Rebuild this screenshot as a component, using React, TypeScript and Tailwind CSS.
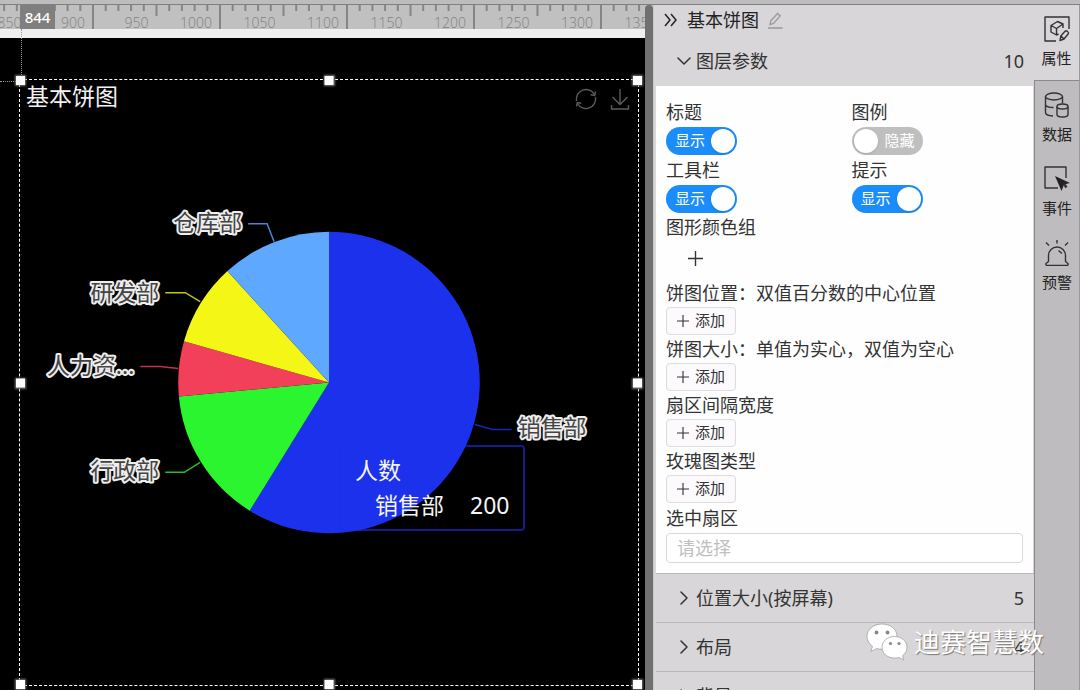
import { useState } from "react";
import type { ReactNode } from "react";
import { ChevronDown, ChevronRight } from "lucide-react";

type Slice = {
  name: string;
  value: number;
  color: string;
  line: string;
  label: { x: number; y: number; anchor: "start" | "end" };
};

const SLICES: Slice[] = [
  { name: "销售部", value: 200, color: "#1c31ec", line: "146,42 164,47 183,47", label: { x: 189, y: 54, anchor: "start" } },
  { name: "行政部", value: 50, color: "#2bf52f", line: "-129,80 -145,90 -164,90", label: { x: -170, y: 97, anchor: "end" } },
  { name: "人力资...", value: 20, color: "#f2405a", line: "-151,-14 -169,-16 -189,-16", label: { x: -195, y: -9, anchor: "end" } },
  { name: "研发部", value: 30, color: "#f4f716", line: "-129,-81 -144,-90 -164,-90", label: { x: -170, y: -82, anchor: "end" } },
  { name: "仓库部", value: 40, color: "#5fa8ff", line: "-55,-141 -62,-159 -81,-159", label: { x: -87, y: -152, anchor: "end" } },
];

const RADIUS = 151;

const LIST_FIELDS = [
  "饼图位置：双值百分数的中心位置",
  "饼图大小：单值为实心，双值为空心",
  "扇区间隔宽度",
  "玫瑰图类型",
];

const CLOSED_SECTIONS = [
  { title: "位置大小(按屏幕)", count: "5" },
  { title: "布局", count: "4" },
  { title: "背景", count: "" },
];

const HANDLES = [
  "-left-1 -top-1",
  "left-1/2 -top-1 -translate-x-1/2",
  "-right-1 -top-1",
  "-left-1 top-1/2 -translate-y-1/2",
  "-right-1 top-1/2 -translate-y-1/2",
  "-left-1 -bottom-1",
  "left-1/2 -bottom-1 -translate-x-1/2",
  "-right-1 -bottom-1",
];

function slicePath(from: number, to: number) {
  const point = (turn: number) => {
    const a = turn * 2 * Math.PI;
    return `${(RADIUS * Math.sin(a)).toFixed(2)} ${(-RADIUS * Math.cos(a)).toFixed(2)}`;
  };
  const large = to - from > 0.5 ? 1 : 0;
  return `M0 0L${point(from)}A${RADIUS} ${RADIUS} 0 ${large} 1 ${point(to)}Z`;
}

function PieChart() {
  const total = SLICES.reduce((sum, s) => sum + s.value, 0);
  let start = 0;
  return (
    <svg viewBox="-309 -303 618 606" className="absolute inset-0 h-full w-full">
      {SLICES.map((s) => {
        const from = start / total;
        start += s.value;
        return (
          <g key={s.name}>
            <path d={slicePath(from, start / total)} fill={s.color} />
            <polyline points={s.line} fill="none" stroke={s.color} strokeWidth="1.5" opacity="0.8" />
            <text
              x={s.label.x}
              y={s.label.y}
              textAnchor={s.label.anchor}
              fontSize="23"
              fill="#444"
              stroke="#eee"
              strokeWidth="4"
              strokeLinejoin="round"
              paintOrder="stroke"
            >
              {s.name}
            </text>
          </g>
        );
      })}
    </svg>
  );
}

function Ruler() {
  const ticks = Array.from({ length: 54 }, (_, i) => i);
  return (
    <div className="relative h-6 overflow-hidden bg-[#c0c0c0]">
      <svg className="block h-6 w-full" fontFamily="'Open Sans', sans-serif">
        {ticks.map((i) => {
          const x = 93 + (i - 8) * 12.7;
          const major = (i - 8) % 10 === 0;
          const middle = (i - 8) % 5 === 0;
          return (
            <g key={i}>
              <rect x={x - 1} y="0" width="2" height={major ? 24 : middle ? 11 : 6} fill="#858585" />
              {middle && (
                <text x={x - 8} y="23" textAnchor="end" fontSize="14" fontWeight="300" fill="#808080">
                  {900 + (i - 8) * 10}
                </text>
              )}
            </g>
          );
        })}
      </svg>
      <span className="absolute left-5 top-0 h-6 w-[35px] bg-[#7f7f7f] text-center text-[15px] leading-6 font-medium text-white">
        844
      </span>
    </div>
  );
}

function Canvas() {
  return (
    <main className="flex min-w-0 flex-1 flex-col">
      <Ruler />
      <div className="h-[9px] bg-[#efefef]" />
      <div className="relative flex-1 bg-black">
        <div className="absolute -top-[9px] left-[21px] h-[52px] border-l border-dotted border-[#999]" />
        <div className="absolute left-0 top-[43px] w-5 border-t border-dotted border-[#999]" />
        <section className="absolute bottom-1 left-[19px] right-[6px] top-[41px] border border-dashed border-white">
          <PieChart />
          <header className="relative flex items-start justify-between pl-1.5 pr-[7px]">
            <h1 className="text-[23px] leading-8 text-[#f2f2f2]">基本饼图</h1>
            <div className="flex gap-3 pt-2 text-[#5c5c5c]">
              <button type="button" aria-label="刷新">
                <svg width="22" height="22" viewBox="0 0 22 22" fill="none" stroke="currentColor" strokeWidth="1.4">
                  <path d="M1.500 13A9.700 9.700 0 0 1 19.500 6.500M20.500 9A9.700 9.700 0 0 1 2.500 15.500" />
                  <path d="M20.500 3.500l-.8 4-4-.8M1.500 18.500l.8-4 4 .8" />
                </svg>
              </button>
              <button type="button" aria-label="下载">
                <svg width="22" height="22" viewBox="0 0 22 22" fill="none" stroke="currentColor" strokeWidth="1.4">
                  <path d="M11 1v15M3.500 9l7.500 7.500L18.500 9M2.500 17v4h17v-4" />
                </svg>
              </button>
            </div>
          </header>
          <div className="absolute left-1/2 top-1/2 ml-[10px] mt-[62px] rounded border-2 border-[#1c31ec]/60 px-3.5 py-1.5 text-[23px] leading-[35px] text-[#f5f5f5]">
            <p>人数</p>
            <p className="flex justify-between gap-[26px] pl-5">
              <span>销售部</span>
              <span>200</span>
            </p>
          </div>
          {HANDLES.map((place) => (
            <span key={place} className={`absolute h-[9px] w-[9px] bg-white shadow-[0_0_2px_1px_#777] ${place}`} />
          ))}
        </section>
      </div>
    </main>
  );
}

function Switch({ label, initial }: { label: string; initial: boolean }) {
  const [on, setOn] = useState(initial);
  return (
    <label className="relative block w-fit">
      <span className="block leading-[30px]">{label}</span>
      <input type="checkbox" checked={on} onChange={() => setOn(!on)} className="sr-only" />
      <span
        className={`flex h-7 w-[71px] items-center justify-between rounded-full text-[15px] text-white ${
          on ? "flex-row bg-[#1b8dfb] pl-[9px] pr-0.5" : "flex-row-reverse bg-[#bfbfbf] pl-0.5 pr-2"
        }`}
      >
        <span>{on ? "显示" : "隐藏"}</span>
        <span className="h-6 w-6 rounded-full bg-white shadow" />
      </span>
    </label>
  );
}

function Plus({ size }: { size: number }) {
  return (
    <svg width={size} height={size} viewBox="0 0 14 14" fill="none" stroke="currentColor" strokeWidth="1.3">
      <path d="M7 0v14M0 7h14" />
    </svg>
  );
}

function SectionHeader({ title, count, open = false }: { title: string; count: string; open?: boolean }) {
  const Icon = open ? ChevronDown : ChevronRight;
  return (
    <button
      type="button"
      aria-expanded={open}
      className={`flex w-full shrink-0 items-center pl-4 pr-2.5 text-left ${
        open ? "h-[51px]" : "h-[49px] border-t border-[#b9b7b9]"
      }`}
    >
      <Icon className="h-6 w-6" strokeWidth={1.5} aria-hidden />
      <span className="flex-1">{title}</span>
      <span>{count}</span>
    </button>
  );
}

function PropertyPanel() {
  return (
    <aside className="flex w-[380px] shrink-0 flex-col overflow-hidden bg-[#d8d6d8] pl-0.5 text-lg text-[#333]">
      <div className="flex h-[30px] shrink-0 items-center pl-2">
        <button type="button" aria-label="收起">
          <svg width="13" height="14" viewBox="0 0 13 14" fill="none" stroke="#222" strokeWidth="1.5">
            <path d="M1 1l5 6-5 6M7 1l5 6-5 6" />
          </svg>
        </button>
        <h2 className="ml-2.5 text-lg text-[#222]">基本饼图</h2>
        <button type="button" aria-label="重命名" className="ml-2 text-[#999]">
          <svg width="16" height="17" viewBox="0 0 16 17" fill="none" stroke="currentColor" strokeWidth="1.3">
            <path d="M3 12.500l.8-3.600L10.500 1.500l2.700 2.400-6.700 7.500zM1 16h14.500" />
          </svg>
        </button>
      </div>
      <SectionHeader title="图层参数" count="10" open />
      <div className="mr-px shrink-0 bg-[#fefefe] px-2.5 pt-[11px] pb-2.5">
        <div className="grid grid-cols-2 gap-x-3.5">
          <Switch label="标题" initial />
          <Switch label="图例" initial={false} />
          <Switch label="工具栏" initial />
          <Switch label="提示" initial />
        </div>
        <p className="leading-7">图形颜色组</p>
        <button type="button" aria-label="添加颜色" className="mb-1 ml-[22px] flex h-[34px] items-center">
          <Plus size={15} />
        </button>
        {LIST_FIELDS.map((label) => (
          <div key={label}>
            <p className="leading-7">{label}</p>
            <button
              type="button"
              aria-label={`添加 ${label}`}
              className="flex h-7 w-[70px] items-center justify-center gap-1.5 rounded-sm border border-[#dcdcdc] bg-[#fcfafd] text-[15px]"
            >
              <Plus size={12} />
              <span>添加</span>
            </button>
          </div>
        ))}
        <label htmlFor="sector" className="block leading-[30px]">
          选中扇区
        </label>
        <input
          id="sector"
          placeholder="请选择"
          className="block h-[30px] w-full rounded-sm border border-[#d9d9d9] bg-white px-2.5 placeholder:text-[#bfbfbf]"
        />
      </div>
      {CLOSED_SECTIONS.map((s) => (
        <SectionHeader key={s.title} title={s.title} count={s.count} />
      ))}
    </aside>
  );
}

function TabIcon({ children }: { children: ReactNode }) {
  return (
    <svg width="26" height="26" viewBox="0 0 26 26" fill="none" stroke="#333" strokeWidth="1.4" strokeLinejoin="round">
      {children}
    </svg>
  );
}

const TABS = [
  {
    name: "属性",
    icon: (
      <>
        <path d="M12 25H1V1h24v12" />
        <path d="M7 9.500l6.500-4L19 8v4M7 9.500v6.500l5.500 3v-6.500zM12.500 12.500L19 8M12.500 19l2-1" />
        <path d="M16 24.500l.8-4.500 4.500-5c1-.9 4 1.500 3 2.800L20 23zM17 20l3 3" />
      </>
    ),
  },
  {
    name: "数据",
    icon: (
      <>
        <ellipse cx="10" cy="4.500" rx="8.500" ry="3.500" />
        <path d="M1.500 4.500v16c0 1.800 3 3.200 7.500 3.500M18.500 4.500v7M1.500 12.500c0 1.500 3 3 8 3" />
        <ellipse cx="18.500" cy="14.500" rx="5.500" ry="2.500" />
        <path d="M13 14.500v8c0 1.400 2.500 2.500 5.500 2.500s5.500-1.100 5.500-2.500v-8" />
      </>
    ),
  },
  {
    name: "事件",
    icon: (
      <>
        <path d="M14 22H1V1h21v11" />
        <path d="M11 10l15 7-6 1.500-2.500 6.500z" fill="#222" stroke="none" />
        <path d="M20 18l2.500 3.500" strokeWidth="2.500" />
      </>
    ),
  },
  {
    name: "预警",
    icon: (
      <>
        <path d="M4.500 21.500v-6a8.500 8.500 0 0 1 17 0v6l2.500 2c.5.800 0 2-1 2H3c-1 0-1.500-1.200-1-2z" />
        <path d="M13 0v3.500M2 2.500l3 3M24 2.500l-3 3M14.500 10.500l3.500 3" />
      </>
    ),
  },
];

function TabBar() {
  return (
    <nav className="flex w-[46px] shrink-0 flex-col border-r border-[#999] bg-[#bebcbe]">
      {TABS.map((tab, i) => (
        <button
          key={tab.name}
          type="button"
          aria-current={i === 0}
          className={`flex shrink-0 flex-col items-center gap-1.5 pt-[11px] text-[15px] leading-5 text-[#222] ${
            i === 0 ? "h-[76px] border-b border-[#8a8a8a] bg-[#d8d6d8]" : "h-[74px] border-l border-[#8a8a8a]"
          }`}
        >
          <TabIcon>{tab.icon}</TabIcon>
          <span>{tab.name}</span>
        </button>
      ))}
      <div className="flex-1 border-l border-[#8a8a8a]" />
    </nav>
  );
}

function Watermark() {
  return (
    <div className="pointer-events-none absolute bottom-7 right-9 flex items-center gap-1.5 text-[26px] leading-10 text-white [text-shadow:1px_1px_1px_#777]">
      <svg width="42" height="38" viewBox="0 0 42 38" fill="#fff" stroke="#999" strokeWidth="0.7">
        <path d="M16 1C7.500 1 1 6.500 1 13.500c0 4 2.200 7.500 5.500 9.800L4.800 28.500l5.800-3c1.700.5 3.500.8 5.400.8 8.500 0 15-5.600 15-12.800S24.500 1 16 1z" />
        <path d="M28.500 13.500C21.500 13.500 16 18.200 16 24.300s5.500 10.800 12.500 10.800c1.500 0 3-.2 4.400-.7l5 2.600-1.400-4.300c2.800-2 4.500-5 4.500-8.400 0-6.100-5.500-10.800-12.500-10.800z" />
        <g fill="#888" stroke="none">
          <circle cx="10.500" cy="9.500" r="1.900" />
          <circle cx="21.500" cy="9.500" r="1.900" />
          <circle cx="24.500" cy="20.500" r="1.600" />
          <circle cx="33" cy="20.500" r="1.600" />
        </g>
      </svg>
      <span>迪赛智慧数</span>
    </div>
  );
}

export default function App() {
  return (
    <div className="relative flex h-screen flex-col overflow-hidden bg-[#bebcbe] font-['Noto_Sans','Noto_Sans_CJK_SC',sans-serif]">
      <div className="h-[5px] shrink-0 border-b border-[#808080] bg-[#bdbdbd]" />
      <div className="flex min-h-0 flex-1">
        <Canvas />
        <div className="w-2 shrink-0 rounded-t bg-[#707070]" />
        <div className="w-px shrink-0 bg-[#c8c8c8]" />
        <PropertyPanel />
        <TabBar />
      </div>
      <Watermark />
    </div>
  );
}
